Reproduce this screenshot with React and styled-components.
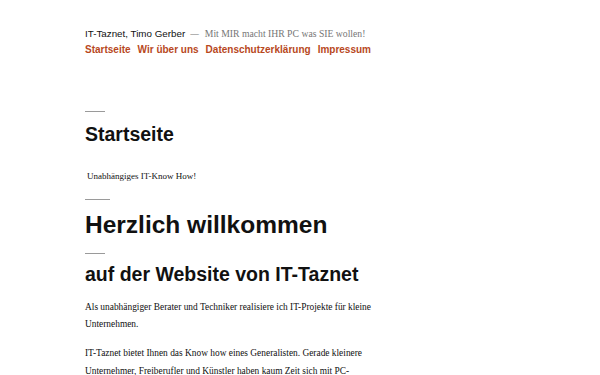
import React from "react";
import styled, { createGlobalStyle } from "styled-components";

const GlobalStyle = createGlobalStyle`
  html, body {
    margin: 0;
    padding: 0;
    background: #fff;
  }
  body {
    font-family: "Liberation Serif", "Times New Roman", serif;
    color: #111;
  }
`;

const Page = styled.div`
  padding: 0 85px;
  width: 600px;
  box-sizing: border-box;
`;

const Header = styled.header`
  padding-top: 27px;
`;

const Branding = styled.div`
  display: flex;
  align-items: baseline;
  line-height: 14px;
  height: 14px;
`;

const SiteTitle = styled.span`
  font-family: "Liberation Sans", Arial, sans-serif;
  font-size: 9.8px;
  color: #111;
`;

const Dash = styled.span`
  font-family: "Liberation Sans", Arial, sans-serif;
  font-size: 8.6px;
  color: #767676;
  margin: 0 6px 0 5px;
`;

const Description = styled.span`
  font-size: 9.7px;
  color: #767676;
`;

const Nav = styled.nav`
  display: flex;
  gap: 7px;
  margin-top: 1.5px;
`;

const NavLink = styled.a`
  font-family: "Liberation Sans", Arial, sans-serif;
  font-weight: 700;
  font-size: 10px;
  line-height: 14px;
  color: #b8481d;
  text-decoration: none;
`;

const Main = styled.main`
  padding-top: 54px;
`;

const Rule = styled.hr`
  border: 0;
  height: 1px;
  background: #9a9a9a;
  width: ${(p) => p.$w}px;
  margin: ${(p) => p.$mt}px 0 0;
`;

const Title = styled.h1`
  font-family: "Liberation Sans", Arial, sans-serif;
  font-weight: 700;
  font-size: ${(p) => p.$size}px;
  line-height: 1.2;
  margin: ${(p) => p.$mt}px 0 0;
  color: #111;
`;

const Lead = styled.p`
  font-size: 9px;
  line-height: 12px;
  margin: 24px 0 0 2px;
`;

const Text = styled.p`
  font-size: 9.4px;
  line-height: 17.6px;
  margin: ${(p) => p.$mt}px 0 0;
  max-width: 300px;
`;

export default function App() {
  return (
    <>
      <GlobalStyle />
      <Page>
        <Header>
          <Branding>
            <SiteTitle>IT-Taznet, Timo Gerber</SiteTitle>
            <Dash>—</Dash>
            <Description>Mit MIR macht IHR PC was SIE wollen!</Description>
          </Branding>
          <Nav>
            <NavLink href="#">Startseite</NavLink>
            <NavLink href="#">Wir über uns</NavLink>
            <NavLink href="#">Datenschutzerklärung</NavLink>
            <NavLink href="#">Impressum</NavLink>
          </Nav>
        </Header>
        <Main>
          <Rule $w={20} $mt={0} />
          <Title $size={19.5} $mt={11}>Startseite</Title>
          <Lead>Unabhängiges IT-Know How!</Lead>
          <Rule $w={25} $mt={17} />
          <Title $size={24.5} $mt={10}>Herzlich willkommen</Title>
          <Rule $w={20} $mt={13.5} />
          <Title $size={19.5} $mt={9.5}>auf der Website von IT-Taznet</Title>
          <Text $mt={12}>
            Als unabhängiger Berater und Techniker realisiere ich IT-Projekte für kleine Unternehmen.
          </Text>
          <Text $mt={11.5}>
            IT-Taznet bietet Ihnen das Know how eines Generalisten. Gerade kleinere Unternehmer, Freiberufler und Künstler haben kaum Zeit sich mit PC-Problemen zu beschäftigen.
          </Text>
        </Main>
      </Page>
    </>
  );
}
